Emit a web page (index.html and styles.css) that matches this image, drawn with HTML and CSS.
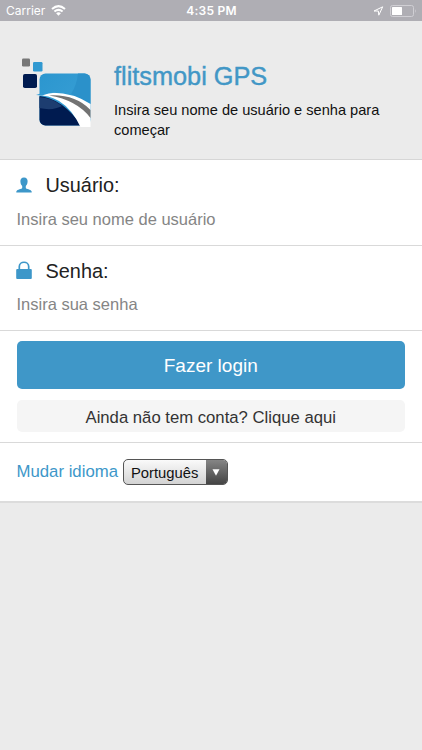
FILE: index.html
```html
<!DOCTYPE html>
<html lang="pt">
<head>
<meta charset="utf-8">
<title>flitsmobi GPS</title>
<link rel="stylesheet" href="styles.css">
</head>
<body>
<div class="status">
  <div class="status-left"><span>Carrier</span>
    <svg width="15" height="11" viewBox="0 0 15 11" fill="none" stroke="#fff" stroke-width="2"><path d="M1 3.9Q7.5-1.7 14 3.9M3.4 6.6Q7.5 3.1 11.6 6.6"/><path d="M5.1 8.2Q7.5 6.3 9.900 8.200L7.500 10.700Z" fill="#fff" stroke="none"/></svg>
  </div>
  <div class="status-time">4:35 PM</div>
  <div class="status-right">
    <svg width="11" height="10" viewBox="0 0 11 10" fill="none" stroke="#fff" stroke-width="1"><path d="M9.700.8L1 5H5.300L5.800 9.200Z"/></svg>
    <svg width="27" height="12" viewBox="0 0 27 12"><rect x=".5" y=".5" width="23" height="11" rx="2" fill="none" stroke="#d0cfd4"/><rect x="2" y="2" width="10" height="8" rx=".5" fill="#fff"/><path d="M25 4Q26.6 6 25 8Z" fill="#d0cfd4"/></svg>
  </div>
</div>
<header class="header">
  <svg class="logo" width="70" height="72" viewBox="0 0 70 72">
    <defs>
      <clipPath id="tile"><rect x="17.500" y="15.500" width="51" height="52" rx="6"/></clipPath>
      <linearGradient id="sky" x1="0" y1="0" x2="1" y2="1"><stop offset="0" stop-color="#2b96cf"/><stop offset="1" stop-color="#3ca1d6"/></linearGradient>
    </defs>
    <rect x="0" y="0.500" width="8" height="8" rx="1.200" fill="#777"/>
    <rect x="11" y="4" width="9.500" height="9.500" rx="1.200" fill="#3199d1"/>
    <rect x="1" y="16" width="14" height="14" rx="1.800" fill="#001b50"/>
    <g clip-path="url(#tile)">
      <rect x="17" y="15" width="52" height="53" fill="url(#sky)"/>
      <path d="M56 15Q55 27 49 36L69 46V15Z" fill="#2b91ca"/>
      <path d="M17 38Q40 40 60 68H17Z" fill="#001b50"/>
      <path d="M17 39Q31 40 40 48Q31 53 17 50Z" fill="#1d3d70"/>
    </g>
    <path d="M14 37Q43 30 68.500 46V69H58.500Q50 51 37 43Q27 37 14 37Z" fill="#fff"/>
    <path d="M14 37Q23 33 35 34.500Q26 35 20 37.500Z" fill="#3199d1"/>
    <path d="M27 37.500Q53 36 68.500 52V60Q55 42 27 37.500Z" fill="#737373"/>
  </svg>
  <div class="intro">
    <h1>flitsmobi GPS</h1>
    <p>Insira seu nome de usuário e senha para começar</p>
  </div>
</header>
<main>
  <section class="field">
    <label for="user"><svg width="16" height="16" viewBox="0 0 16 16"><path d="M8 .5C5.400.5 4.200 2.200 4.400 4.500C4.500 7 5.500 8.200 6.200 9V11C5.800 12.300 1.300 12 .3 14.500V15.500H15.700V14.500C14.700 12 10.200 12.300 9.800 11V9C10.500 8.200 11.500 7 11.600 4.500C11.800 2.200 10.600.5 8 .5Z" fill="#3d97c9"/></svg>Usuário:</label>
    <input id="user" type="text" placeholder="Insira seu nome de usuário">
  </section>
  <section class="field">
    <label for="pass"><svg width="16" height="18" viewBox="0 0 16 18"><path d="M3.300 9V5.500C3.300-.2 12.700-.2 12.700 5.500V9" fill="none" stroke="#3d97c9" stroke-width="1.700"/><rect x=".2" y="8" width="15.600" height="10" rx="1" fill="#3d97c9"/></svg>Senha:</label>
    <input id="pass" type="password" placeholder="Insira sua senha">
  </section>
  <section class="actions">
    <button class="login">Fazer login</button>
    <button class="signup">Ainda não tem conta? Clique aqui</button>
  </section>
  <section class="language">
    <span>Mudar idioma</span>
    <button class="picker"><span class="value">Português</span><span class="arrow"><svg width="8" height="7" viewBox="0 0 8 7"><path d="M.5 .3H7.500L4 6.700Z" fill="#fff"/></svg></span></button>
  </section>
</main>
</body>
</html>
```
FILE: styles.css
```css
* { box-sizing: border-box; }
body {
  margin: 0;
  min-height: 750px;
  background: #ebebeb;
  color: #222;
  font-family: "Liberation Sans", Arial, sans-serif;
}
svg { display: block; flex: none; }
button, input { margin: 0; padding: 0; border: 0; font-family: inherit; }
.status {
  display: grid;
  grid-template-columns: 1fr auto 1fr;
  align-items: center;
  height: 21px;
  padding: 0 5px 0 6px;
  background: #afaeb4;
  color: #fff;
  font-family: Inter, sans-serif;
  font-size: 12px;
}
.status-left, .status-right { display: flex; align-items: center; }
.status-left { gap: 6px; }
.status-right { justify-content: flex-end; gap: 6px; }
.status-time { font-weight: 600; letter-spacing: .25px; }
.header {
  display: flex;
  gap: 22px;
  height: 139px;
  padding: 37px 20px 0 22px;
  border-bottom: 1px solid #d6d6d6;
}
.intro { flex: 1; padding-top: 4px; }
h1 {
  margin: 0 0 9px;
  color: #4297c6;
  font-size: 25.300px;
  font-weight: 400;
  line-height: 29px;
  -webkit-text-stroke: .4px #4297c6;
}
p { margin: 0; color: #111; font-size: 14.600px; line-height: 20px; }
main { background: #fff; border-bottom: 2px solid #dcdcdc; }
section { border-bottom: 1px solid #d9d9d9; }
.field { padding: 12px 17px 0 16px; height: 85.500px; }
.field label { display: flex; align-items: center; gap: 13.500px; height: 27px; font-size: 19.900px; }
.field label svg { margin-bottom: 2px; }
.field input {
  display: block;
  width: 100%;
  height: 24px;
  margin-top: 8px;
  padding-left: .5px;
  background: transparent;
  font-size: 16.500px;
}
.field input::placeholder { color: #858585; opacity: 1; }
.actions { display: flex; flex-direction: column; gap: 11px; height: 112px; padding: 10px 17px 0 16.500px; }
.login { height: 48px; border-radius: 5px; background: #3f97c8; color: #fff; font-size: 19px; padding-top: 2px; }
.signup { height: 32px; border-radius: 5px; background: #f5f5f5; color: #333; font-size: 16.700px; padding-top: 4px; }
.language {
  display: flex;
  align-items: center;
  gap: 5px;
  height: 58px;
  padding-left: 16.500px;
  border: 0;
  color: #3d97c9;
  font-size: 16.750px;
}
.picker {
  display: flex;
  width: 105px;
  height: 26px;
  overflow: hidden;
  border: 1px solid #555;
  border-radius: 5px;
  background: linear-gradient(#fafafa, #d3d3d3);
  color: #111;
  font-size: 14.800px;
}
.value { width: 82px; padding-left: 7px; line-height: 26px; text-align: left; white-space: nowrap; }
.arrow { display: flex; flex: 1; justify-content: center; padding-top: 9px; height: 24px; background: linear-gradient(#858585, #444); }
```
